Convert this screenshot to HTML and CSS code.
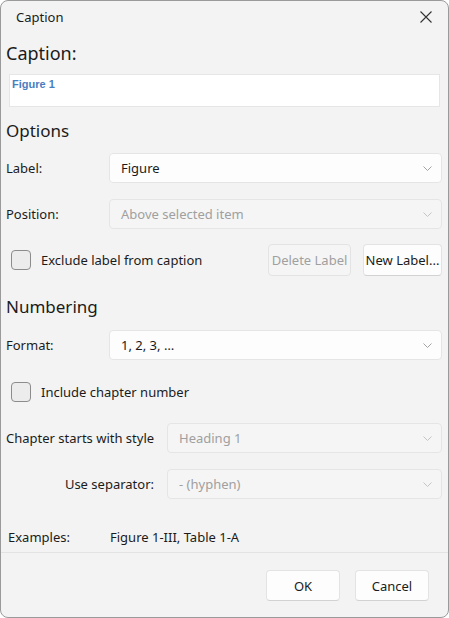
FILE: index.html
```html
<!DOCTYPE html>
<html>
<head>
<meta charset="utf-8">
<link rel="stylesheet" href="styles.css">
</head>
<body>
<div class="window">
  <div class="titlebar">
    <span class="title">Caption</span>
    <svg class="close" width="12" height="12" viewBox="0 0 12 12"><path d="M0.5 0.5 L11.5 11.5 M11.5 0.5 L0.5 11.5" stroke="#333" stroke-width="1.1" fill="none"/></svg>
  </div>
  <div class="content">
    <div class="heading h-caption">Caption:</div>
    <div class="textbox"><span class="cap-text">Figure 1</span></div>
    <div class="heading h-options">Options</div>
    <div class="row r-label">
      <span class="lbl">Label:</span>
      <div class="dropdown"><span>Figure</span><svg class="chev" width="9" height="5" viewBox="0 0 9 5"><path d="M0.5 0.5 L4.5 4.5 L8.5 0.5" stroke="#a3a3a3" fill="none"/></svg></div>
    </div>
    <div class="row r-position">
      <span class="lbl">Position:</span>
      <div class="dropdown disabled"><span>Above selected item</span><svg class="chev" width="9" height="5" viewBox="0 0 9 5"><path d="M0.5 0.5 L4.5 4.5 L8.5 0.5" stroke="#c4c4c4" fill="none"/></svg></div>
    </div>
    <div class="row r-check1">
      <span class="checkbox"></span>
      <span class="check-label">Exclude label from caption</span>
      <span class="btn btn-delete disabled">Delete Label</span>
      <span class="btn btn-new">New Label...</span>
    </div>
    <div class="heading h-numbering">Numbering</div>
    <div class="row r-format">
      <span class="lbl">Format:</span>
      <div class="dropdown"><span>1, 2, 3, …</span><svg class="chev" width="9" height="5" viewBox="0 0 9 5"><path d="M0.5 0.5 L4.5 4.5 L8.5 0.5" stroke="#a3a3a3" fill="none"/></svg></div>
    </div>
    <div class="row r-check2">
      <span class="checkbox"></span>
      <span class="check-label">Include chapter number</span>
    </div>
    <div class="row r-chapter">
      <span class="lbl wide">Chapter starts with style</span>
      <div class="dropdown disabled"><span>Heading 1</span><svg class="chev" width="9" height="5" viewBox="0 0 9 5"><path d="M0.5 0.5 L4.5 4.5 L8.5 0.5" stroke="#c4c4c4" fill="none"/></svg></div>
    </div>
    <div class="row r-sep">
      <span class="lbl wide right">Use separator:</span>
      <div class="dropdown disabled"><span>- (hyphen)</span><svg class="chev" width="9" height="5" viewBox="0 0 9 5"><path d="M0.5 0.5 L4.5 4.5 L8.5 0.5" stroke="#c4c4c4" fill="none"/></svg></div>
    </div>
    <div class="row r-examples">
      <span class="ex-lbl">Examples:</span>
      <span class="ex-val">Figure 1-III, Table 1-A</span>
    </div>
  </div>
  <div class="footer">
    <span class="btn btn-ok">OK</span>
    <span class="btn btn-cancel">Cancel</span>
  </div>
</div>
</body>
</html>
```
FILE: styles.css
```css
html, body {
  margin: 0;
  padding: 0;
  background: #ffffff;
}
body {
  font-family: "Noto Sans", "Open Sans", sans-serif;
  font-size: 13px;
  color: #1b1b1b;
}
.window {
  width: 449px;
  height: 618px;
  box-sizing: border-box;
  border: 1px solid #9a9a9a;
  border-radius: 8px;
  background: #f3f3f3;
  display: flex;
  flex-direction: column;
  overflow: hidden;
}
.titlebar {
  height: 32px;
  display: flex;
  align-items: center;
  justify-content: space-between;
  padding: 0 16px 0 15px;
  flex: none;
}
.title {
  font-size: 13px;
  line-height: 32px;
}
.close {
  display: block;
}
.content {
  padding: 0 6px 0 5px;
  display: flex;
  flex-direction: column;
  flex: none;
  height: 519px;
  box-sizing: border-box;
}
.heading {
  height: 24px;
  line-height: 24px;
  font-size: 17px;
  font-weight: 400;
}
.h-caption { margin-top: 8px; font-size: 18px; }
.textbox {
  margin: 9px 2px 0 3px;
  height: 33px;
  box-sizing: border-box;
  background: #ffffff;
  border: 1px solid #e6e6e6;
  padding: 2px 2px;
}
.cap-text {
  font-family: "Liberation Sans", Arial, sans-serif;
  font-weight: bold;
  font-size: 11px;
  color: #4a7dc0;
  line-height: 14px;
  display: block;
}
.h-options { margin-top: 12px; }
.row {
  display: flex;
  align-items: center;
  white-space: nowrap;
}
.lbl {
  width: 103px;
  flex: none;
}
.lbl.wide { width: 148px; margin-right: 13px; }
.lbl.right { text-align: right; }
.dropdown {
  flex: 1;
  height: 30px;
  box-sizing: border-box;
  background: #fdfdfd;
  border: 1px solid #e5e5e5;
  border-radius: 4px;
  display: flex;
  align-items: center;
  justify-content: space-between;
  padding: 0 9px 0 11px;
}
.dropdown.disabled {
  background: #f5f5f5;
  color: #a0a0a0;
}
.chev { display: block; }
.r-label { margin-top: 10px; }
.r-position { margin-top: 16px; }
.r-check1 { margin-top: 15px; height: 32px; }
.checkbox {
  width: 20px;
  height: 20px;
  box-sizing: border-box;
  border: 1px solid #8c8c8c;
  border-radius: 4px;
  background: #ececec;
  margin-left: 5px;
  margin-right: 10px;
  flex: none;
}
.check-label { flex: 1; }
.btn {
  height: 32px;
  box-sizing: border-box;
  border: 1px solid #e3e3e3;
  border-bottom-color: #d2d2d2;
  border-radius: 4px;
  background: #fdfdfd;
  display: flex;
  align-items: center;
  justify-content: center;
  flex: none;
}
.btn.disabled {
  background: #f5f5f5;
  color: #a0a0a0;
  border-bottom-color: #e3e3e3;
}
.btn-delete { width: 83px; margin-right: 12px; }
.btn-new { width: 79px; }
.h-numbering { margin-top: 19px; }
.r-format { margin-top: 11px; }
.r-check2 { margin-top: 22px; height: 20px; }
.r-chapter { margin-top: 21px; }
.r-sep { margin-top: 16px; }
.r-examples { margin-top: 28px; height: 20px; }
.ex-lbl { width: 102px; margin-left: 2px; flex: none; }
.footer {
  flex: 1;
  border-top: 1px solid #e3e3e3;
  display: flex;
  justify-content: flex-end;
  align-items: flex-start;
  padding: 17px 19px 0 0;
  gap: 15px;
}
.footer .btn { width: 74px; height: 31px; }
```
